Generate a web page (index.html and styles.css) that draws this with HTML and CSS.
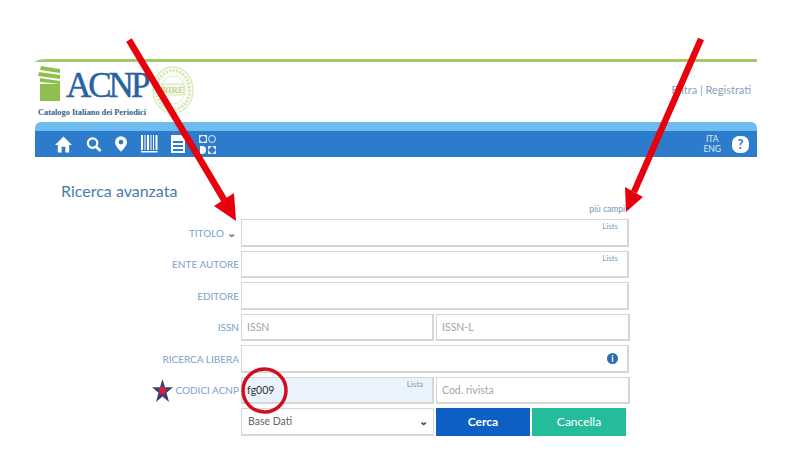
FILE: index.html
```html
<!DOCTYPE html>
<html lang="en">
<head>
    <meta charset="UTF-8">
    <title>ACNP Ricerca avanzata</title>
    <link rel="stylesheet" href="styles.css">
</head>
<body>
    <div class="page">
        <div class="top">
            <div class="logo">
                <div class="logo-row">
                    <svg class="books" width="23" height="35" viewBox="0 0 23 35">
                        <path d="M3 0 L22 3 V7 L2 4 Z M1 6 L22 9 V13 L0 10 Z M2 12 L22 15 V18 L2 16 Z" fill="#8fc04f"/>
                        <rect x="2" y="18" width="20" height="17" fill="#8fc04f"/>
                    </svg>
                    <span class="logo-name">ACNP</span>
                    <svg class="seal" width="44" height="50" viewBox="0 0 44 50">
                        <ellipse cx="22" cy="25" rx="20" ry="23" fill="#fbfdf4" stroke="#dbe9c4" stroke-width="1.500"/>
                        <ellipse cx="22" cy="25" rx="16.500" ry="19.500" fill="none" stroke="#d3e4b6" stroke-width="3" stroke-dasharray="2 1.500"/>
                        <ellipse cx="22" cy="25" rx="12" ry="14" fill="#fff" stroke="#dfecc8"/>
                        <rect x="11" y="19" width="22" height="11" fill="#f6f9ea" stroke="#d3e4b6"/>
                        <text x="22" y="28" class="seal-text" text-anchor="middle">BIRE</text>
                    </svg>
                </div>
                <div class="logo-sub">Catalogo Italiano dei Periodici</div>
            </div>
            <div class="login">Entra | Registrati</div>
        </div>
        <div class="band"></div>
        <nav class="bar">
            <div class="nav-icons">
                <svg width="17" height="17" viewBox="0 0 18 17"><path d="M9 0 L18 9 H15 V17 H11 V11 H7 V17 H3 V9 H0 Z" fill="#fff"/></svg>
                <svg width="16" height="17" viewBox="0 0 17 17"><circle cx="7" cy="7" r="5" fill="none" stroke="#fff" stroke-width="2.400"/><path d="M10.500 10.500 L15.500 15.500" stroke="#fff" stroke-width="3"/></svg>
                <svg width="12" height="16" viewBox="0 0 13 17"><path fill-rule="evenodd" d="M6.500 0 A6.500 6.500 0 0 1 13 6.500 C13 10 9 14 6.500 17 C4 14 0 10 0 6.500 A6.500 6.500 0 0 1 6.500 0 Z M6.500 4 A2.500 2.500 0 1 0 6.500 9 A2.500 2.500 0 1 0 6.500 4 Z" fill="#fff"/></svg>
                <svg width="17" height="18" viewBox="0 0 17 18"><path d="M0 0h2v15H0z M3.500 0h1v15h-1z M6 0h2v15H6z M9.500 0h1v15h-1z M12 0h1v15h-1z M14.500 0h2v15h-2z M0 16h16.500v1.500H0z" fill="#fff"/></svg>
                <svg width="14" height="18" viewBox="0 0 14 18"><path fill-rule="evenodd" d="M0 0h10l4 4v14H0z M2 6v2h10V6z M2 10v2h10v-2z M2 14v2h10v-2z" fill="#fff"/></svg>
                <svg width="17" height="19" viewBox="0 0 17 19">
                    <rect x="0" y="0" width="8" height="8" fill="#dfeaf6"/><circle cx="4" cy="4" r="3" fill="#2d7ccb"/>
                    <circle cx="13" cy="4" r="3.500" fill="none" stroke="#dfeaf6"/>
                    <path d="M1 11h2a4 4 0 0 1 0 8H1z" fill="#fff"/>
                    <rect x="9" y="11" width="8" height="8" fill="#dfeaf6"/><path d="M13 11l4 4-4 4-4-4z" fill="#2d7ccb"/>
                </svg>
            </div>
            <div class="bar-right">
                <div class="langs">ITA<br>ENG</div>
                <div class="help">?</div>
            </div>
        </nav>
    </div>

    <main class="search">
        <h1>Ricerca avanzata</h1>
        <div class="more"><a>più campi</a></div>
        <form class="grid">
            <label>TITOLO <span class="chev">⌄</span></label>
            <div class="field"><input type="text"><span class="lists">Lists</span></div>

            <label>ENTE AUTORE</label>
            <div class="field"><input type="text"><span class="lists">Lists</span></div>

            <label>EDITORE</label>
            <div class="field"><input type="text"></div>

            <label>ISSN</label>
            <div class="pair">
                <input type="text" placeholder="ISSN">
                <input type="text" placeholder="ISSN-L">
            </div>

            <label>RICERCA LIBERA</label>
            <div class="field"><input type="text"><span class="info">i</span></div>

            <label class="star-label">
                <svg class="star" width="21" height="23" viewBox="0 0 21 21" preserveAspectRatio="none"><path d="M10.500 0 L13 7.500 H21 L14.500 12.500 L17 21 L10.500 16 L4 21 L6.500 12.500 L0 7.500 H8 Z" fill="#3d3f70"/><circle cx="10.500" cy="10.500" r="3.500" fill="#d81e3a"/></svg>
                CODICI ACNP
            </label>
            <div class="pair">
                <div class="field"><input class="filled" type="text" value="fg009"><span class="lists">Lista</span></div>
                <input type="text" placeholder="Cod. rivista">
            </div>

            <span></span>
            <div class="pair actions">
                <div class="select">Base Dati <span class="chev">⌄</span></div>
                <div class="buttons">
                    <button type="button" class="cerca">Cerca</button>
                    <button type="button" class="cancella">Cancella</button>
                </div>
            </div>
        </form>
    </main>

    <svg class="marks" width="800" height="470" viewBox="0 0 800 470">
        <path d="M129 40 L226 203" stroke="#e8000c" stroke-width="6.500" fill="none"/>
        <path d="M236 221 L214 206 L234 193 Z" fill="#e8000c"/>
        <path d="M701 39 L634 192" stroke="#e8000c" stroke-width="6.500" fill="none"/>
        <path d="M626 212 L625 187 L643 197 Z" fill="#e8000c"/>
        <ellipse cx="264.500" cy="390.500" rx="21.500" ry="21.500" fill="none" stroke="#d00f1e" stroke-width="3.500"/>
    </svg>
</body>
</html>
```

FILE: styles.css
```css
body {
    margin: 0;
    font-family: Lato, "Open Sans", sans-serif;
    background: #fff;
    position: relative;
    height: 470px;
    overflow: hidden;
}
.page {
    width: 722px;
    margin-left: 35px;
    padding-top: 59px;
}
.top {
    height: 60px;
    border-top: 3px solid #a4c96c;
    border-top-left-radius: 12px 3px;
    display: flex;
    justify-content: space-between;
    align-items: flex-start;
}
.logo {
    padding: 3px 0 0 3px;
}
.logo-row {
    display: flex;
    align-items: flex-start;
    height: 43px;
}
.books {
    margin-top: 1px;
}
.logo-name {
    font-family: "Liberation Serif", serif;
    font-size: 35px;
    line-height: 40px;
    color: #27639f;
    -webkit-text-stroke: 0.500px #27639f;
    margin: 1px 0 0 5px;
    letter-spacing: -3px;
}
.seal {
    margin-left: 4px;
}
.seal-text {
    font-family: "Liberation Serif", serif;
    font-size: 9px;
    font-weight: bold;
    fill: #bdd698;
}
.logo-sub {
    font-family: "Liberation Serif", serif;
    font-weight: bold;
    font-size: 8.300px;
    color: #33608f;
    white-space: nowrap;
}
.login {
    font-size: 11px;
    line-height: 14px;
    color: #8aa3c0;
    padding: 21px 6px 0 0;
}
.band {
    height: 9px;
    background: #6ebcef;
    border-radius: 6px 6px 0 0;
}
.bar {
    height: 26px;
    background: #2d7ccb;
    display: flex;
    justify-content: space-between;
    align-items: center;
    padding: 0 8px 0 20px;
}
.nav-icons {
    display: flex;
    align-items: center;
    gap: 13.500px;
}
.bar-right {
    display: flex;
    align-items: center;
    gap: 11px;
}
.langs {
    font-size: 8.500px;
    line-height: 10px;
    color: #dfeaf6;
    text-align: center;
}
.help {
    width: 17px;
    height: 17px;
    border-radius: 7px;
    background: #fff;
    color: #2d7ccb;
    font-size: 13px;
    font-weight: bold;
    line-height: 17px;
    text-align: center;
}
.search {
    padding-top: 24px;
}
h1 {
    margin: 0 0 0 61px;
    font-size: 16px;
    line-height: 20px;
    font-weight: 400;
    color: #4a7bae;
}
.more {
    width: 625px;
    margin-top: 3px;
    text-align: right;
    font-size: 8.500px;
    line-height: 11px;
    height: 11px;
    color: #6f95bd;
}
.grid {
    display: grid;
    grid-template-columns: 239px 388px;
    column-gap: 2px;
    grid-auto-rows: 27.500px;
    row-gap: 4px;
    margin-top: 4px;
}
label {
    display: flex;
    justify-content: flex-end;
    align-items: center;
    gap: 3px;
    font-size: 10px;
    color: #7ba1c8;
}
.chev {
    font-size: 11px;
    line-height: 8px;
    font-weight: bold;
    color: #444;
}
label .chev {
    color: #5b7fa5;
    margin-right: 3px;
}
.star-label {
    gap: 2px;
}
.field {
    position: relative;
    display: flex;
    min-width: 0;
}
input {
    flex: 1;
    width: 100%;
    min-width: 0;
    box-sizing: border-box;
    height: 100%;
    border: 2px solid #d6d6d6;
    border-width: 1.500px 2px 2px 1.500px;
    padding: 0 5px;
    font-family: inherit;
    font-size: 10.500px;
    color: #444;
    background: #fff;
    outline: none;
}
input::placeholder {
    color: #a5a5a5;
}
.filled {
    background: #eaf3fc;
    color: #333;
}
.lists {
    position: absolute;
    top: 2px;
    right: 11px;
    font-size: 8px;
    color: #7d9ec2;
}
.info {
    position: absolute;
    top: 8px;
    right: 11px;
    width: 11px;
    height: 11px;
    border-radius: 50%;
    background: #2a6db0;
    color: #fff;
    font-size: 9px;
    font-weight: bold;
    line-height: 11px;
    text-align: center;
}
.pair {
    display: grid;
    grid-template-columns: 193px 194px;
    column-gap: 2px;
}
.select {
    box-sizing: border-box;
    border: 1px solid #d6d6d6;
    border-bottom-width: 2px;
    padding: 0 5px 0 6px;
    display: flex;
    justify-content: space-between;
    align-items: center;
    font-size: 10.500px;
    color: #666;
}
.buttons {
    display: flex;
    gap: 2px;
    width: 190px;
}
button {
    flex: 1;
    border: none;
    font-family: inherit;
    font-size: 12px;
    color: #fff;
}
.cerca {
    background: #0d5fc4;
    font-weight: bold;
}
.cancella {
    background: #25bc9b;
}
.marks {
    position: absolute;
    top: 0;
    left: 0;
    pointer-events: none;
}
```
